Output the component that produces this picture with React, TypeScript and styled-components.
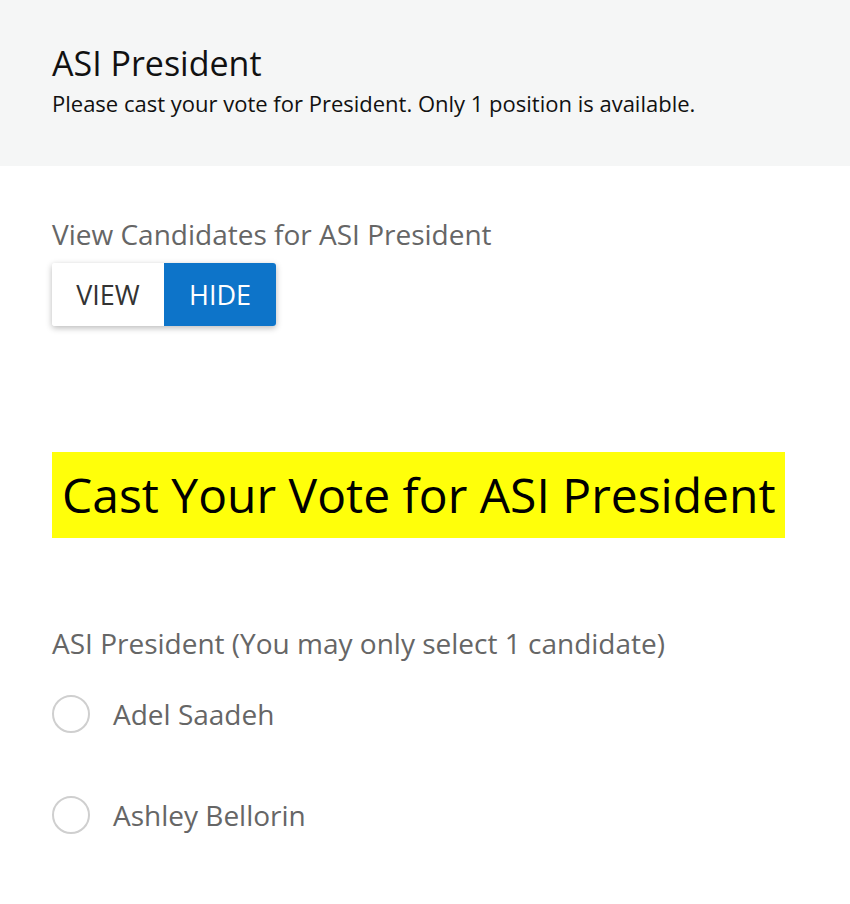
import { createGlobalStyle, styled } from "styled-components";
import { useState } from "react";

const GlobalStyle = createGlobalStyle`
  html, body {
    margin: 0;
    padding: 0;
    background: #ffffff;
    font-family: "Open Sans", "Noto Sans", sans-serif;
  }
`;

const Header = styled.header`
  background-color: #f5f6f6;
  height: 166px;
  box-sizing: border-box;
  padding: 41px 52px 0;
`;

const Title = styled.h1`
  margin: 0;
  font-size: 34px;
  font-weight: 400;
  line-height: 44px;
  color: #111;
`;

const Subtitle = styled.p`
  margin: 4px 0 0;
  font-size: 22px;
  line-height: 28px;
  color: #111;
`;

const Body = styled.main`
  padding: 0 52px;
`;

const Label = styled.div<{ top: number }>`
  margin-top: ${({ top }) => top}px;
  font-size: 28px;
  line-height: 38px;
  color: #666;
`;

const Toggle = styled.div`
  display: inline-flex;
  margin-top: 10px;
  height: 63px;
  border-radius: 3px;
  overflow: hidden;
  box-shadow: 0 2px 6px rgba(0, 0, 0, 0.28);
`;

const ToggleButton = styled.button<{ active: boolean }>`
  border: none;
  margin: 0;
  width: 112px;
  padding: 0;
  font-family: inherit;
  font-size: 27px;
  cursor: pointer;
  background: ${({ active }) => (active ? "#0d74c9" : "#ffffff")};
  color: ${({ active }) => (active ? "#ffffff" : "#333")};
`;

const Banner = styled.h2`
  display: inline-block;
  margin: 126px 0 0;
  background: #ffff0a;
  width: 733px;
  height: 86px;
  box-sizing: border-box;
  padding-left: 10px;
  font-size: 48px;
  font-weight: 400;
  line-height: 86px;
  color: #000;
  white-space: nowrap;
`;

const OptionList = styled.div`
  display: flex;
  flex-direction: column;
  gap: 63px;
  margin-top: 33px;
`;

const Option = styled.label`
  display: flex;
  align-items: center;
  gap: 23px;
  height: 38px;
  font-size: 28px;
  color: #666;
  cursor: pointer;
`;

const Radio = styled.span<{ checked: boolean }>`
  width: 38px;
  height: 38px;
  box-sizing: border-box;
  border-radius: 50%;
  border: 2px solid #cfcfcf;
  background: ${({ checked }) => (checked ? "radial-gradient(circle, #0d74c9 40%, #fff 42%)" : "#fff")};
`;

const candidates = ["Adel Saadeh", "Ashley Bellorin"];

export default function App() {
  const [view, setView] = useState(false);
  const [picked, setPicked] = useState<string | null>(null);

  return (
    <>
      <GlobalStyle />
      <Header>
        <Title>ASI President</Title>
        <Subtitle>Please cast your vote for President. Only 1 position is available.</Subtitle>
      </Header>
      <Body>
        <Label top={49}>View Candidates for ASI President</Label>
        <Toggle>
          <ToggleButton active={view} onClick={() => setView(true)}>VIEW</ToggleButton>
          <ToggleButton active={!view} onClick={() => setView(false)}>HIDE</ToggleButton>
        </Toggle>
        <div>
          <Banner>Cast Your Vote for ASI President</Banner>
        </div>
        <Label top={86}>ASI President (You may only select 1 candidate)</Label>
        <OptionList>
          {candidates.map((c) => (
            <Option key={c} onClick={() => setPicked(c)}>
              <Radio checked={picked === c} />
              {c}
            </Option>
          ))}
        </OptionList>
      </Body>
    </>
  );
}
